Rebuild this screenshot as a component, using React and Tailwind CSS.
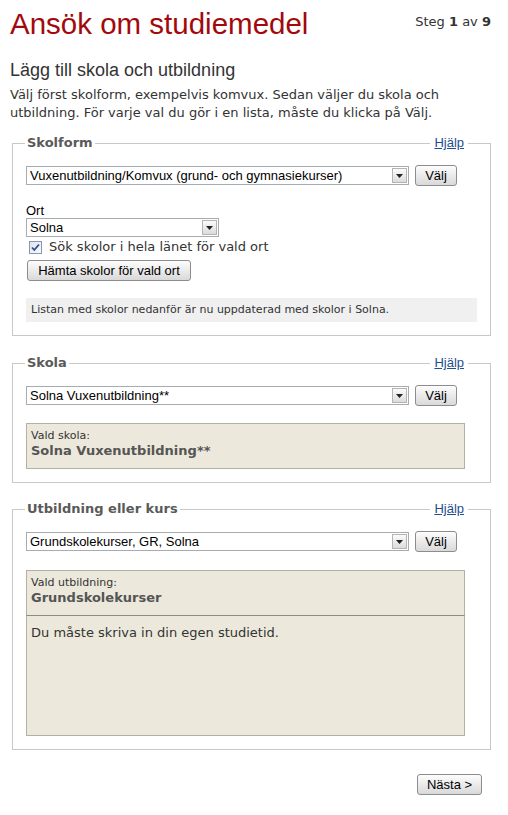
import { useState } from "react";

const arial = { fontFamily: '"Liberation Sans", Arial, sans-serif' };

function Select({ value, width }) {
  return (
    <div
      className={`flex items-center h-[19px] border border-[#a5acb2] bg-white ${width}`}
    >
      <span className="flex-1 pl-[3px] text-[13px] leading-[17px] text-black truncate font-['Liberation_Sans',Arial,sans-serif]">
        {value}
      </span>
      {/* dropdown arrow */}
      <span className="mr-px h-[15px] w-[15px] flex items-center justify-center border border-[#b4b4b4] bg-gradient-to-b from-[#fbfbfb] to-[#dcdcdc]">
        <svg width="7" height="4" viewBox="0 0 7 4">
          <path d="M0 0h7L3.5 4z" fill="#222" />
        </svg>
      </span>
    </div>
  );
}

function Button({ children, className = "" }) {
  return (
    <button
      className={`h-[21px] px-[8px] rounded-[3px] border border-[#8d8d8d] bg-gradient-to-b from-[#fdfdfd] to-[#d9d9d9] text-[13px] leading-[19px] text-black font-['Liberation_Sans',Arial,sans-serif] ${className}`}
    >
      {children}
    </button>
  );
}

function Box({ title, children, className = "" }) {
  return (
    <section
      className={`relative ml-[2px] border border-[#c8c8c8] px-[13px] pt-[21px] pb-[13px] ${className}`}
    >
      <span className="absolute -top-[9px] left-[12px] bg-white px-[2px] text-[13px] leading-[16px] font-bold text-[#5a5a5a]">
        {title}
      </span>
      <a
        href="#"
        className="absolute -top-[9px] right-[22px] bg-white px-[4px] text-[13px] leading-[16px] text-[#1f4f8f] underline"
        style={arial}
      >
        Hjälp
      </a>
      {children}
    </section>
  );
}

function PickRow({ value }) {
  return (
    <div className="flex items-center gap-[6px] h-[21px]">
      <Select value={value} width="w-[383px]" />
      <Button className="w-[42px] px-0">Välj</Button>
    </div>
  );
}

export default function App() {
  const [allCounty, setAllCounty] = useState(true);

  return (
    <div className="min-h-[815px] bg-white pl-[10px] pr-[17px] pt-[7px] pb-[20px] font-['DejaVu_Sans',Verdana,sans-serif] text-[#333]">
      {/* HEADER */}
      <div className="flex items-start justify-between">
        <h1
          className="text-[29.5px] leading-[34px] text-[#a3090c]"
          style={arial}
        >
          Ansök om studiemedel
        </h1>
        <div className="mt-[7px] text-[13px] leading-[16px]">
          Steg <b>1</b> av <b>9</b>
        </div>
      </div>

      <h2 className="mt-[19px] text-[18px] leading-[21px] text-[#333]" style={arial}>
        Lägg till skola och utbildning
      </h2>
      <p className="mt-[5px] text-[13px] leading-[18px]">
        Välj först skolform, exempelvis komvux. Sedan väljer du skola och
        <br />
        utbildning. För varje val du gör i en lista, måste du klicka på Välj.
      </p>

      {/* SKOLFORM */}
      <Box title="Skolform" className="mt-[21px]">
        <PickRow value="Vuxenutbildning/Komvux (grund- och gymnasiekurser)" />

        <div className="mt-[17px] text-[13px] leading-[15px] text-black" style={arial}>
          Ort
        </div>
        <Select value="Solna" width="w-[193px]" />

        <label className="mt-[3px] flex items-center gap-[7px] h-[14px] pl-[3px] text-[13px] leading-[16px]">
          <span
            onClick={() => setAllCounty(!allCounty)}
            className="h-[13px] w-[13px] flex items-center justify-center border border-[#8797b3] bg-gradient-to-br from-[#dde3ee] to-[#f8f9fc]"
          >
            {allCounty && (
              <svg width="9" height="9" viewBox="0 0 9 9">
                <path d="M1 4.5l2.3 2.5L8 1.5" fill="none" stroke="#2d4b8e" strokeWidth="1.8" />
              </svg>
            )}
          </span>
          Sök skolor i hela länet för vald ort
        </label>

        <Button className="mt-[6px] ml-px w-[164px]">Hämta skolor för vald ort</Button>

        <div className="mt-[16px] h-[24px] flex items-center bg-[#f0f0f0] pl-[5px] text-[11px] text-[#333]">
          Listan med skolor nedanför är nu uppdaterad med skolor i Solna.
        </div>
      </Box>

      {/* SKOLA */}
      <Box title="Skola" className="mt-[27px]">
        <PickRow value="Solna Vuxenutbildning**" />
        <div className="mt-[17px] w-[439px] h-[46px] border border-[#b3b1a3] bg-[#ece9dc] pl-[4px] pt-[5px]">
          <div className="text-[11px] leading-[13px] text-[#333]">Vald skola:</div>
          <div className="text-[13px] leading-[17px] font-bold text-[#555]">
            Solna Vuxenutbildning**
          </div>
        </div>
      </Box>

      {/* UTBILDNING */}
      <Box title="Utbildning eller kurs" className="mt-[26px]">
        <PickRow value="Grundskolekurser, GR, Solna" />
        <div className="mt-[18px] w-[439px]">
          <div className="h-[46px] border border-[#b3b1a3] border-b-[#8f8d80] bg-[#ece9dc] pl-[4px] pt-[5px]">
            <div className="text-[11px] leading-[13px] text-[#333]">Vald utbildning:</div>
            <div className="text-[13px] leading-[17px] font-bold text-[#555]">
              Grundskolekurser
            </div>
          </div>
          <div className="h-[120px] border border-t-0 border-[#b3b1a3] bg-[#ece9dc] pl-[4px] pt-[9px] text-[13px] leading-[16px] text-[#333]">
            Du måste skriva in din egen studietid.
          </div>
        </div>
      </Box>

      <div className="mt-[24px] flex justify-end pr-[9px]">
        <Button className="w-[65px] h-[21px] px-0">Nästa &gt;</Button>
      </div>
    </div>
  );
}
